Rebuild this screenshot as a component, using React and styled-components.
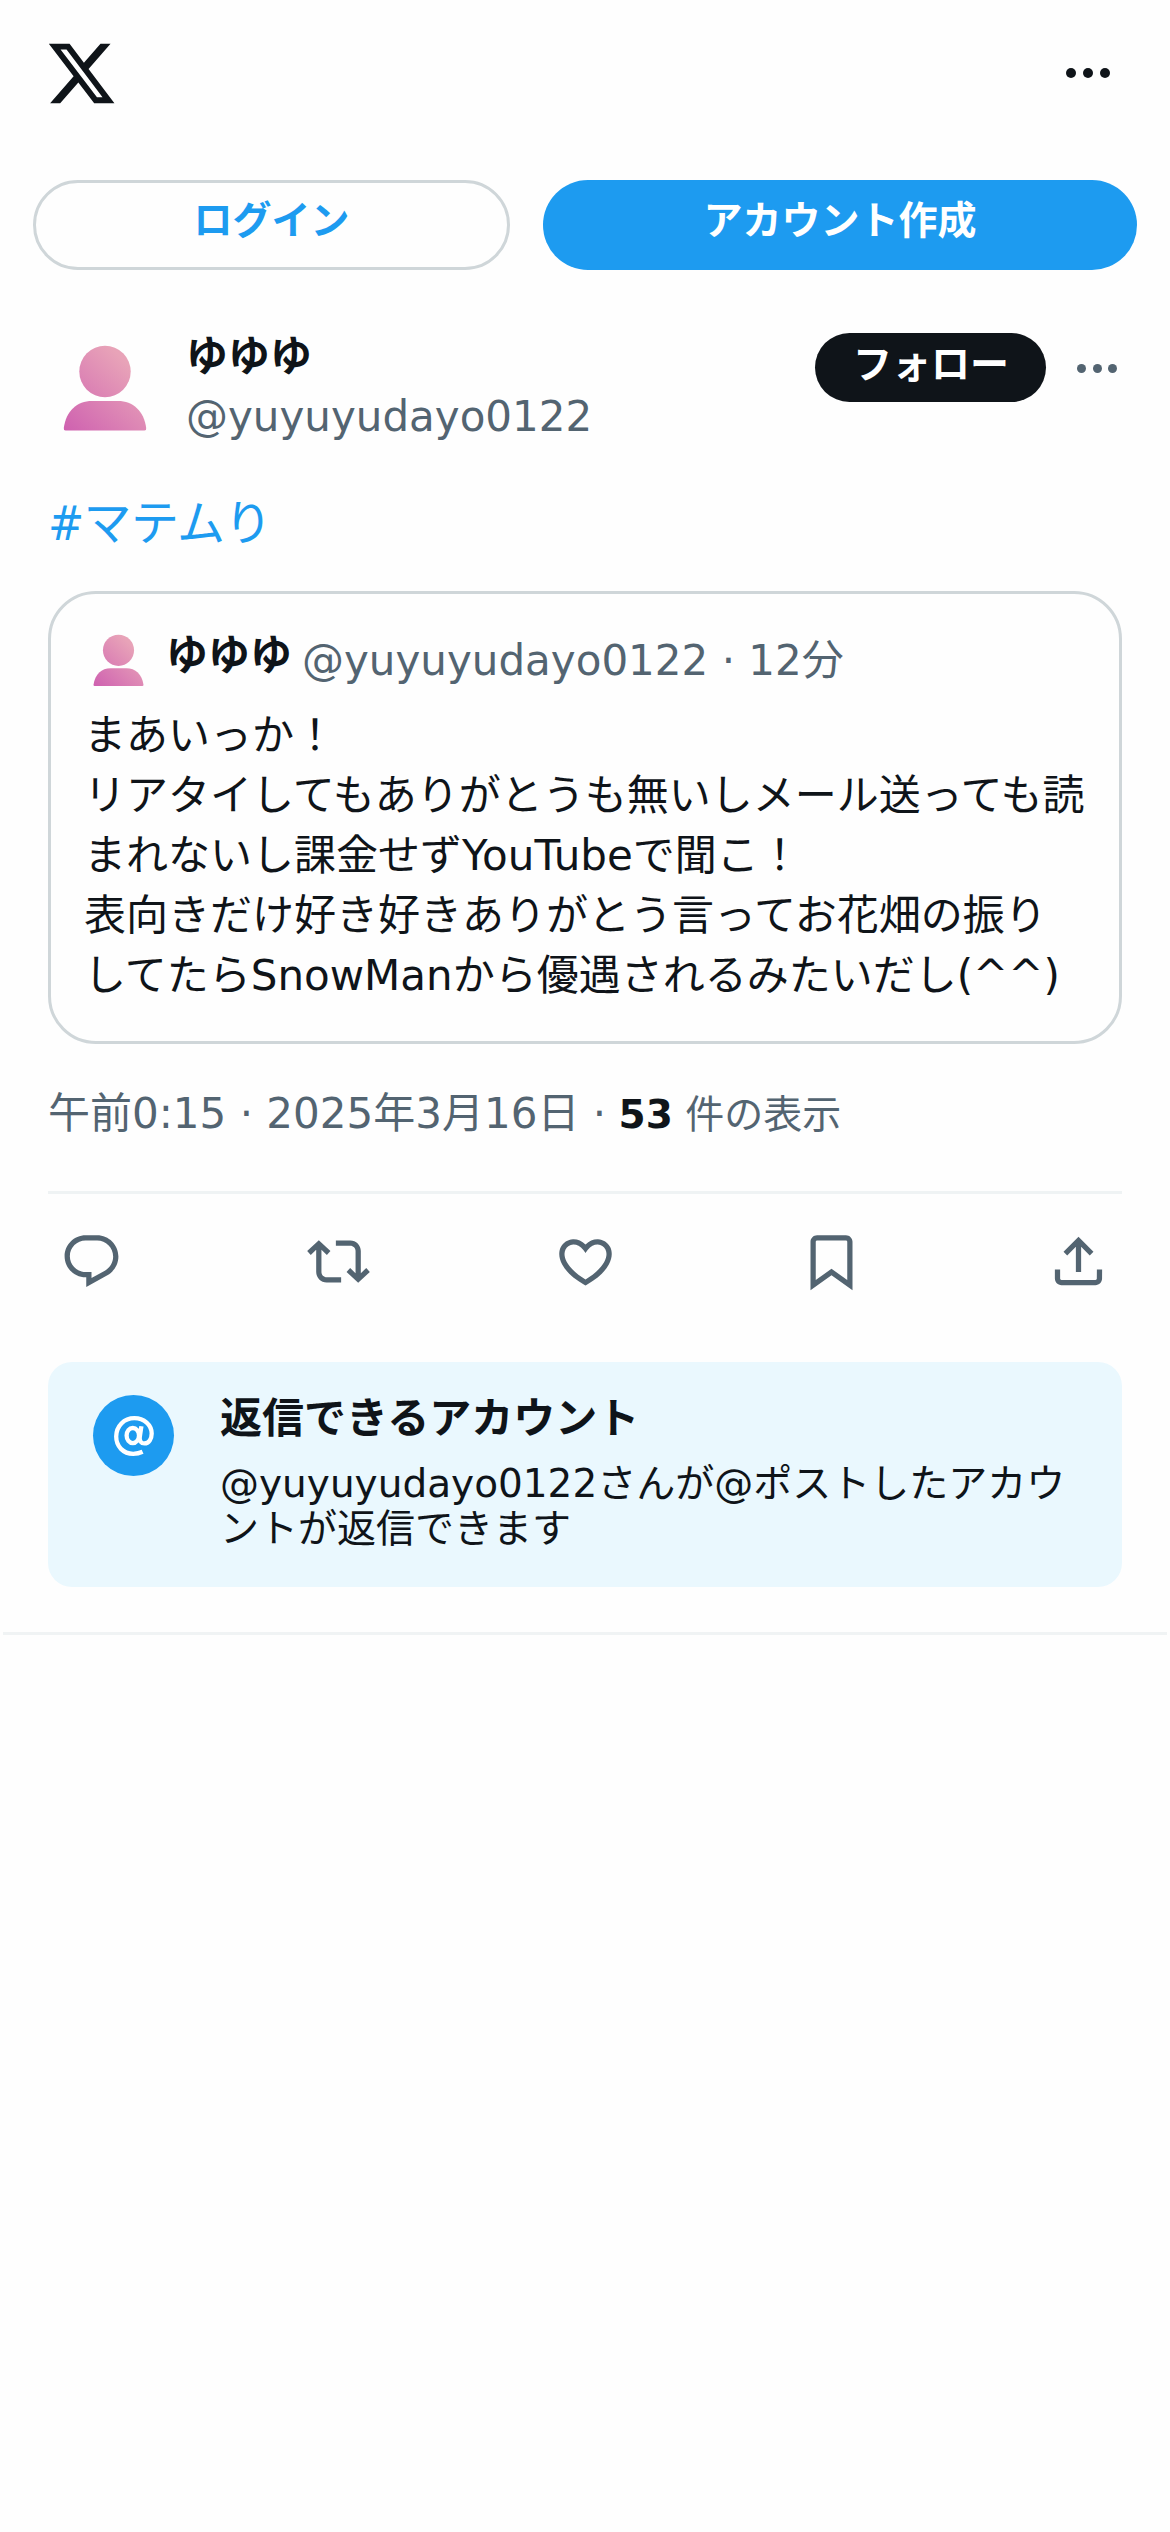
import React from "react";
import styled, { createGlobalStyle } from "styled-components";

const App = () => {
  return (
    <Page>
      <GlobalStyle />
      <TopBar>
        <Logo viewBox="0 0 24 24">
          <path d="M18.244 2.25h3.308l-7.227 8.26 8.502 11.24H16.17l-5.214-6.817L4.99 21.75H1.68l7.73-8.835L1.254 2.25H8.08l4.713 6.231zm-1.161 17.52h1.833L7.084 4.126H5.117z" />
        </Logo>
        <Dots size={10} gap={6.8} color="#0f1419" />
      </TopBar>

      <AuthRow>
        <LoginButton>ログイン</LoginButton>
        <SignupButton>アカウント作成</SignupButton>
      </AuthRow>

      <Post>
        <Author>
          <Avatar id="author" size={114} lift={5} />
          <Names>
            <Name>ゆゆゆ</Name>
            <Handle>@yuyuyudayo0122</Handle>
          </Names>
          <FollowButton>フォロー</FollowButton>
          <Dots size={9} gap={6.3} color="#536471" />
        </Author>

        <Hashtag>#マテムり</Hashtag>

        <Quote>
          <QuoteHead>
            <Avatar id="quote" size={69} lift={3} />
            <QuoteName>ゆゆゆ</QuoteName>
            <QuoteMeta>@yuyuyudayo0122 · 12分</QuoteMeta>
          </QuoteHead>
          <QuoteText>
            まあいっか！
            <br />
            リアタイしてもありがとうも無いしメール送っても読
            <br />
            まれないし課金せずYouTubeで聞こ！
            <br />
            表向きだけ好き好きありがとう言ってお花畑の振り
            <br />
            してたらSnowManから優遇されるみたいだし(^^)
          </QuoteText>
        </Quote>

        <Meta>
          午前0:15 · 2025年3月16日 ·
          <Views>
            {" "}
            <b>53</b> 件の表示
          </Views>
        </Meta>

        <Actions>
          {actions.map((d) => (
            <ActionIcon key={d} viewBox="0 0 24 24">
              <path d={d} />
            </ActionIcon>
          ))}
        </Actions>

        <Notice>
          <NoticeBadge>
            <AtIcon viewBox="0 0 40 40">
              <ellipse cx="18.8" cy="19.6" rx="6.2" ry="7.6" />
              <path d="M27.4 10.2L25.8 21c-.6 4 1.400 6.400 4.600 6.400 4.600 0 7.300-4.600 7.300-9.800C37.700 8.600 30 2.200 20.400 2.200 10 2.200 2.200 10.200 2.200 20.600c0 9.800 7 17.200 17 17.200 3.600 0 6.400-.6 9.400-2" />
            </AtIcon>
          </NoticeBadge>
          <NoticeBody>
            <NoticeTitle>返信できるアカウント</NoticeTitle>
            <NoticeText>
              @yuyuyudayo0122さんが@ポストしたアカウントが返信できます
            </NoticeText>
          </NoticeBody>
        </Notice>
      </Post>
      <Divider />
    </Page>
  );
};

export default App;

const actions = [
  "M1.751 10c0-4.42 3.584-8 8.005-8h4.366c4.49 0 8.129 3.64 8.129 8.13 0 2.96-1.607 5.68-4.196 7.11l-8.054 4.46v-3.69h-.067c-4.49.1-8.183-3.51-8.183-8.01zm8.005-6c-3.317 0-6.005 2.69-6.005 6 0 3.37 2.77 6.08 6.138 6.01l.351-.01h1.761v2.3l5.087-2.81c1.951-1.08 3.163-3.13 3.163-5.36 0-3.39-2.744-6.13-6.129-6.13H9.756z",
  "M4.5 3.88l4.432 4.14-1.364 1.46L5.5 7.55V16c0 1.1.896 2 2 2H13v2H7.5c-2.209 0-4-1.79-4-4V7.55L1.432 9.48.068 8.02 4.5 3.88zM16.5 6H11V4h5.5c2.209 0 4 1.79 4 4v8.45l2.068-1.93 1.364 1.46-4.432 4.14-4.432-4.14 1.364-1.46 2.068 1.93V8c0-1.1-.896-2-2-2z",
  "M16.697 5.5c-1.222-.06-2.679.51-3.89 2.16l-.805 1.09-.806-1.09C9.984 6.01 8.526 5.44 7.304 5.5c-1.243.07-2.349.78-2.91 1.91-.552 1.12-.633 2.78.479 4.82 1.074 1.97 3.257 4.27 7.129 6.61 3.87-2.34 6.052-4.64 7.126-6.61 1.111-2.04 1.03-3.7.477-4.82-.561-1.13-1.666-1.84-2.908-1.91zm4.187 7.69c-1.351 2.48-4.001 5.12-8.379 7.67l-.503.3-.504-.3c-4.379-2.55-7.029-5.19-8.382-7.67-1.36-2.5-1.41-4.86-.514-6.67.887-1.79 2.647-2.91 4.601-3.01 1.651-.09 3.368.56 4.798 2.01 1.429-1.45 3.146-2.1 4.796-2.01 1.954.1 3.714 1.22 4.601 3.01.896 1.81.846 4.17-.514 6.67z",
  "M4 4.5C4 3.12 5.119 2 6.5 2h11C18.881 2 20 3.12 20 4.5v18.44l-8-5.71-8 5.71V4.5zM6.5 4c-.276 0-.5.22-.5.5v14.56l6-4.29 6 4.29V4.5c0-.28-.224-.5-.5-.5h-11z",
  "M12 2.59l5.7 5.7-1.41 1.42L13 6.41V16h-2V6.41l-3.3 3.3-1.41-1.42L12 2.59zM21 15l-.02 3.51c0 1.38-1.12 2.49-2.5 2.49H5.5C4.11 21 3 19.88 3 18.5V15h2v3.5c0 .28.22.5.5.5h12.98c.28 0 .5-.22.5-.5L19 15h2z",
];

const Dots = ({ size, gap, color }) => (
  <DotRow $gap={gap}>
    <Dot $size={size} $color={color} />
    <Dot $size={size} $color={color} />
    <Dot $size={size} $color={color} />
  </DotRow>
);

const Avatar = ({ id, size, lift }) => (
  <AvatarSvg $size={size} $lift={lift} viewBox="0 0 114 114">
    <defs>
      <linearGradient
        id={id}
        gradientUnits="userSpaceOnUse"
        x1="16"
        y1="100"
        x2="78"
        y2="34"
      >
        <stop offset="0" stopColor="#cf62b0" />
        <stop offset="1" stopColor="#e8a3b8" />
      </linearGradient>
    </defs>
    <circle cx="57" cy="43.5" r="25.7" fill={`url(#${id})`} />
    <path
      d="M17.5 102.500Q15.500 102.500 15.800 100C18 83 29 73 44 73h26c15 0 26 10 28.200 27q.3 2.500-1.700 2.500z"
      fill={`url(#${id})`}
    />
  </AvatarSvg>
);

const GlobalStyle = createGlobalStyle`
  body {
    margin: 0;
    background-color: #fefefe;
    color: #0f1419;
    font-family: "DejaVu Sans", "Noto Sans CJK JP", sans-serif;
  }
`;

const Page = styled.div`
  width: 1170px;
  min-height: 2532px;
`;

const TopBar = styled.header`
  display: flex;
  justify-content: space-between;
  align-items: center;
  height: 146px;
  padding: 0 60px 0 45px;
`;

const Logo = styled.svg`
  width: 73px;
  height: 73px;
  fill: #0f1419;
`;

const DotRow = styled.div`
  display: flex;
  gap: ${(props) => props.$gap}px;
`;

const Dot = styled.span`
  width: ${(props) => props.$size}px;
  height: ${(props) => props.$size}px;
  border-radius: 50%;
  background-color: ${(props) => props.$color};
`;

const AuthRow = styled.div`
  display: flex;
  gap: 33px;
  padding: 34px 33px 0;
`;

const Button = styled.button`
  box-sizing: border-box;
  height: 90px;
  padding: 0 0 17px;
  border: none;
  border-radius: 999px;
  font-family: "Noto Sans CJK JP", sans-serif;
  font-size: 39px;
  font-weight: 700;
  color: #fff;
`;

const LoginButton = styled(Button)`
  width: 477px;
  border: 3px solid #cfd6d9;
  background-color: #fefefe;
  color: #1d9bf0;
`;

const SignupButton = styled(Button)`
  width: 594px;
  background-color: #1d9bf0;
`;

const Post = styled.article`
  padding: 63px 48px 0;
`;

const Author = styled.div`
  display: flex;
  align-items: flex-start;
  height: 109px;

  ${DotRow} {
    margin: 31px 5px 0 31px;
  }
`;

const AvatarSvg = styled.svg`
  display: block;
  flex: none;
  width: ${(props) => props.$size}px;
  height: ${(props) => props.$size}px;
  margin-top: -${(props) => props.$lift}px;
`;

const Names = styled.div`
  flex: 1;
  margin: -4px 0 0 24px;
`;

const Name = styled.div`
  font-family: "Noto Sans CJK JP", sans-serif;
  font-size: 42px;
  font-weight: 700;
  line-height: 48px;
`;

const Handle = styled.div`
  margin-top: 16px;
  font-size: 42px;
  line-height: 48px;
  color: #536471;
`;

const FollowButton = styled(Button)`
  width: 231px;
  height: 69px;
  padding: 0 0 14px;
  background-color: #0f1419;
`;

const Hashtag = styled.div`
  margin-top: 51px;
  font-family: "DejaVu Sans Condensed", "Noto Sans CJK JP", sans-serif;
  font-size: 48px;
  line-height: 60px;
  letter-spacing: -0.6px;
  color: #1d9bf0;
`;

const Quote = styled.section`
  box-sizing: border-box;
  height: 453px;
  margin-top: 38px;
  padding: 33px 0 0 33px;
  border: 3px solid #cfd6d9;
  border-radius: 48px;
`;

const QuoteHead = styled.div`
  display: flex;
  align-items: flex-start;
  height: 79px;
`;

const QuoteName = styled(Name)`
  margin: 1px 0 0 13px;
`;

const QuoteMeta = styled.div`
  margin: 4px 0 0 10px;
  font-size: 42px;
  line-height: 60px;
  color: #536471;
`;

const QuoteText = styled.p`
  margin: 0;
  font-size: 42px;
  line-height: 60px;
  white-space: nowrap;
`;

const Meta = styled.div`
  height: 107px;
  margin-top: 40px;
  border-bottom: 3px solid #eff3f4;
  font-size: 42px;
  line-height: 60px;
  color: #536471;
`;

const Views = styled.span`
  font-size: 39px;

  b {
    color: #0f1419;
  }
`;

const Actions = styled.div`
  display: flex;
  justify-content: space-between;
  padding: 36px 12px 0;
`;

const ActionIcon = styled.svg`
  display: block;
  width: 63px;
  height: 63px;
  fill: #536471;
`;

const Notice = styled.div`
  display: flex;
  box-sizing: border-box;
  height: 225px;
  margin-top: 69px;
  padding: 33px 45px 0;
  border-radius: 24px;
  background-color: #eaf8fe;
`;

const NoticeBadge = styled.div`
  display: flex;
  flex: none;
  align-items: center;
  justify-content: center;
  width: 81px;
  height: 81px;
  border-radius: 50%;
  background-color: #1d9bf0;
`;

const AtIcon = styled.svg`
  width: 40px;
  height: 40px;
  fill: none;
  stroke: #fff;
  stroke-width: 4.3;
`;

const NoticeBody = styled.div`
  margin: -4px 0 0 46px;
`;

const NoticeTitle = styled.div`
  font-family: "Noto Sans CJK JP", sans-serif;
  font-size: 42px;
  font-weight: 700;
  line-height: 48px;
`;

const NoticeText = styled.p`
  width: 858px;
  margin: 22px 0 0;
  font-size: 39px;
  line-height: 45px;
`;

const Divider = styled.div`
  height: 3px;
  margin: 45px 3px 0;
  background-color: #f0f3f4;
`;
